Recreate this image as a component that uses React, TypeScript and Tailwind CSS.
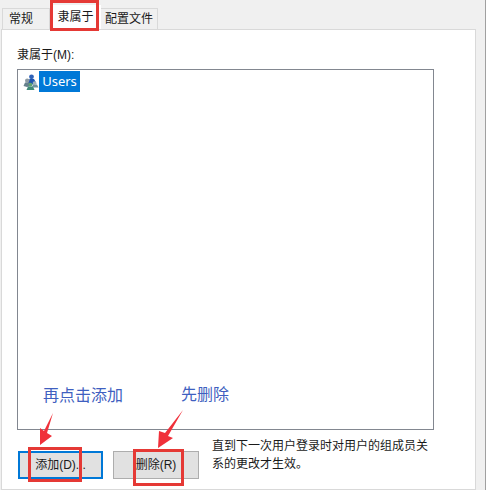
import React from 'react';

const font = "font-['Liberation_Sans','Noto_Sans_CJK_SC',sans-serif]";

const UsersIcon: React.FC = () => (
  <svg width="16" height="16" viewBox="0 0 16 16" className="shrink-0">
    <circle cx="8.5" cy="2.8" r="2.4" fill="#2f62b8" />
    <path d="M5 9 L6.5 5 H11 L13.5 9.5 L9 10.5 Z" fill="#1f55b0" />
    <circle cx="4.2" cy="6.6" r="2.2" fill="#8d9ba3" />
    <path d="M0.5 12 L2 8.6 H6.5 L8 12 L4 13 Z" fill="#66808c" />
    <circle cx="11.5" cy="9" r="1.8" fill="#9fb4bd" />
    <path d="M9 13.5 L10 10.5 H14 L15.5 13.5 Z" fill="#6f929e" />
    <circle cx="7.5" cy="10.6" r="1.9" fill="#5da36f" />
    <path d="M3.5 16 L5 12.6 H10 L11.5 16 Z" fill="#3f8a78" />
  </svg>
);

const App: React.FC = () => {
  return (
    <div className={`relative flex h-[490px] w-[487px] overflow-hidden bg-white text-[12px] text-[#1a1a1a] ${font}`}>
      <div className="h-full w-[486px] border-r border-[#a0a0a0] bg-[#f0f0f0]">
        {/* tabs */}
        <div className="flex h-[29px] items-end pl-[2px]">
          <div className="flex h-[21px] w-[48px] items-center border border-b-0 border-[#d9d9d9] bg-[#f0f0f0] pl-[6px]">常规</div>
          <div className="flex h-[24px] w-[51px] items-center justify-center bg-white">隶属于</div>
          <div className="flex h-[21px] w-[57px] items-center justify-center border border-b-0 border-l-0 border-[#d9d9d9] bg-[#f0f0f0]">配置文件</div>
        </div>
        {/* panel */}
        <div className="ml-[1px] h-[461px] w-[475px] border border-[#d9d9d9] bg-white pl-[15px] pt-[17px]">
          <div className="h-[22px] leading-[16px]">隶属于(M):</div>
          <div className="h-[361px] w-[417px] border border-[#828790] bg-white pl-[5px] pt-[1px]">
            <div className="flex h-[21px] items-center">
              <UsersIcon />
              <span className="flex h-[21px] w-[41px] items-center justify-center bg-[#0078d7] font-['Noto_Sans',sans-serif] text-[13px] text-white">Users</span>
            </div>
          </div>
          <div className="ml-[1px] mt-[21px] flex items-start">
            <button className="h-[28px] w-[85px] border-2 border-[#0078d7] bg-[#e1e1e1] text-[12px]">添加(D)...</button>
            <button className="ml-[10px] h-[28px] w-[86px] border border-[#adadad] bg-[#e1e1e1] text-[12px]">删除(R)</button>
            <p className="ml-[13px] mt-[-14px] w-[226px] leading-[18px]">直到下一次用户登录时对用户的组成员关系的更改才生效。</p>
          </div>
        </div>
      </div>

      {/* annotations */}
      <div className="absolute left-[50px] top-0 h-[31px] w-[49px] border-[3px] border-[#e53935]" />
      <div className="absolute left-[28px] top-[447px] h-[35px] w-[54px] border-[3px] border-[#e53935]" />
      <div className="absolute left-[133px] top-[449px] h-[37px] w-[51px] border-[3px] border-[#e53935]" />
      <span className="absolute left-[43px] top-[386px] text-[16px] leading-[20px] text-[#3f5fc0]">再点击添加</span>
      <span className="absolute left-[181px] top-[385px] text-[16px] leading-[20px] text-[#3f5fc0]">先删除</span>
      <svg className="absolute left-0 top-0" width="487" height="490" viewBox="0 0 487 490">
        <path d="M53 413 L47 433 L52 436 L40 445 L40 428 L44 431 Z" fill="#f0303a" />
        <path d="M183 410 L168 436 L173 438 L158 448 L159 431 L165 433 Z" fill="#f0303a" />
      </svg>
    </div>
  );
};

export default App;
